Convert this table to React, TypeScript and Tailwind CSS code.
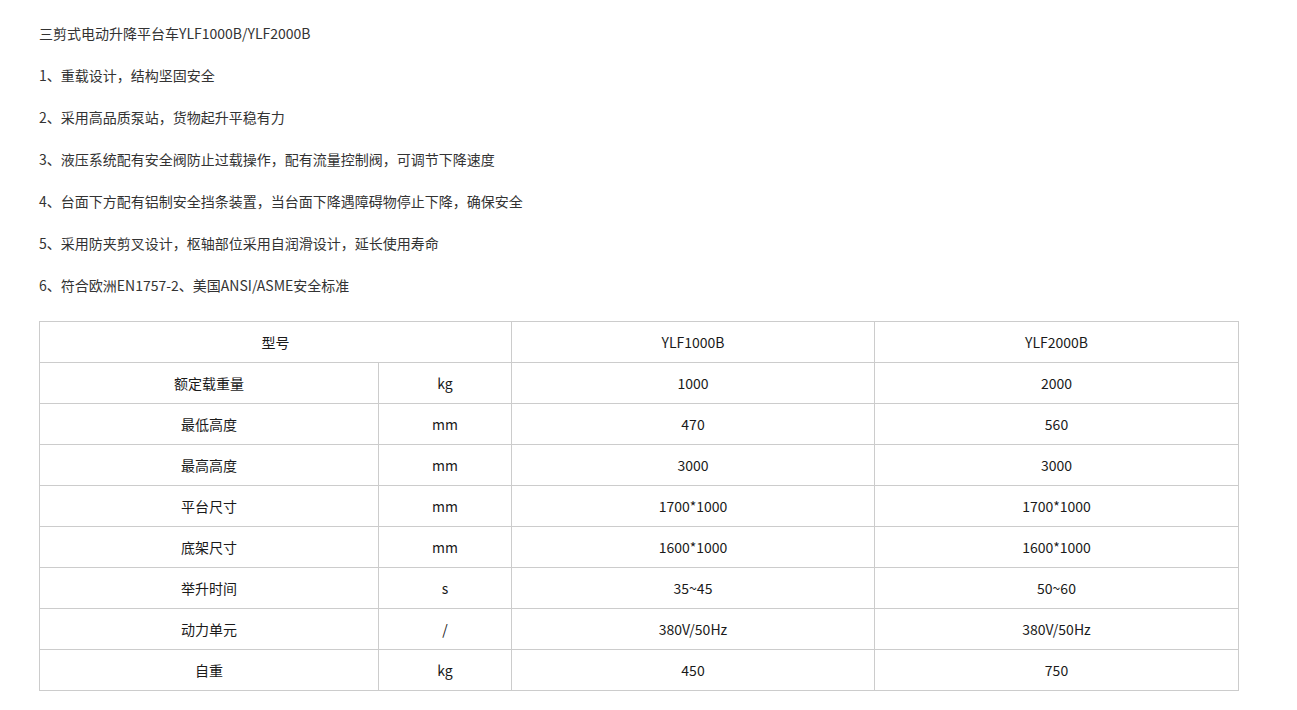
const FEATURES = [
  '三剪式电动升降平台车YLF1000B/YLF2000B',
  '1、重载设计，结构坚固安全',
  '2、采用高品质泵站，货物起升平稳有力',
  '3、液压系统配有安全阀防止过载操作，配有流量控制阀，可调节下降速度',
  '4、台面下方配有铝制安全挡条装置，当台面下降遇障碍物停止下降，确保安全',
  '5、采用防夹剪叉设计，枢轴部位采用自润滑设计，延长使用寿命',
  '6、符合欧洲EN1757-2、美国ANSI/ASME安全标准',
];

const ROWS = [
  ['额定载重量', 'kg', '1000', '2000'],
  ['最低高度', 'mm', '470', '560'],
  ['最高高度', 'mm', '3000', '3000'],
  ['平台尺寸', 'mm', '1700*1000', '1700*1000'],
  ['底架尺寸', 'mm', '1600*1000', '1600*1000'],
  ['举升时间', 's', '35~45', '50~60'],
  ['动力单元', '/', '380V/50Hz', '380V/50Hz'],
  ['自重', 'kg', '450', '750'],
];

const cell = 'border border-[#cccccc] h-[41px] p-0 text-center align-middle';

export default function App() {
  return (
    <div
      className="bg-white min-h-[710px] pl-[39px] pt-[21px] text-[14px] text-[#333333]"
      style={{ fontFamily: '"Microsoft YaHei", "Noto Sans CJK SC", "Noto Sans", sans-serif' }}
    >
      {FEATURES.map((t) => (
        <p key={t} className="leading-[24px] mb-[18px]">{t}</p>
      ))}
      <table className="mt-[24px] border-collapse w-[1199px] table-fixed text-[#1a1a1a]">
        <colgroup>
          <col className="w-[339px]" />
          <col className="w-[133px]" />
          <col className="w-[363px]" />
          <col className="w-[364px]" />
        </colgroup>
        <tbody>
          <tr>
            <td className={cell} colSpan={2}>型号</td>
            <td className={cell}>YLF1000B</td>
            <td className={cell}>YLF2000B</td>
          </tr>
          {ROWS.map((r) => (
            <tr key={r[0]}>
              {r.map((v, i) => (
                <td key={i} className={cell}>{v}</td>
              ))}
            </tr>
          ))}
        </tbody>
      </table>
    </div>
  );
}
